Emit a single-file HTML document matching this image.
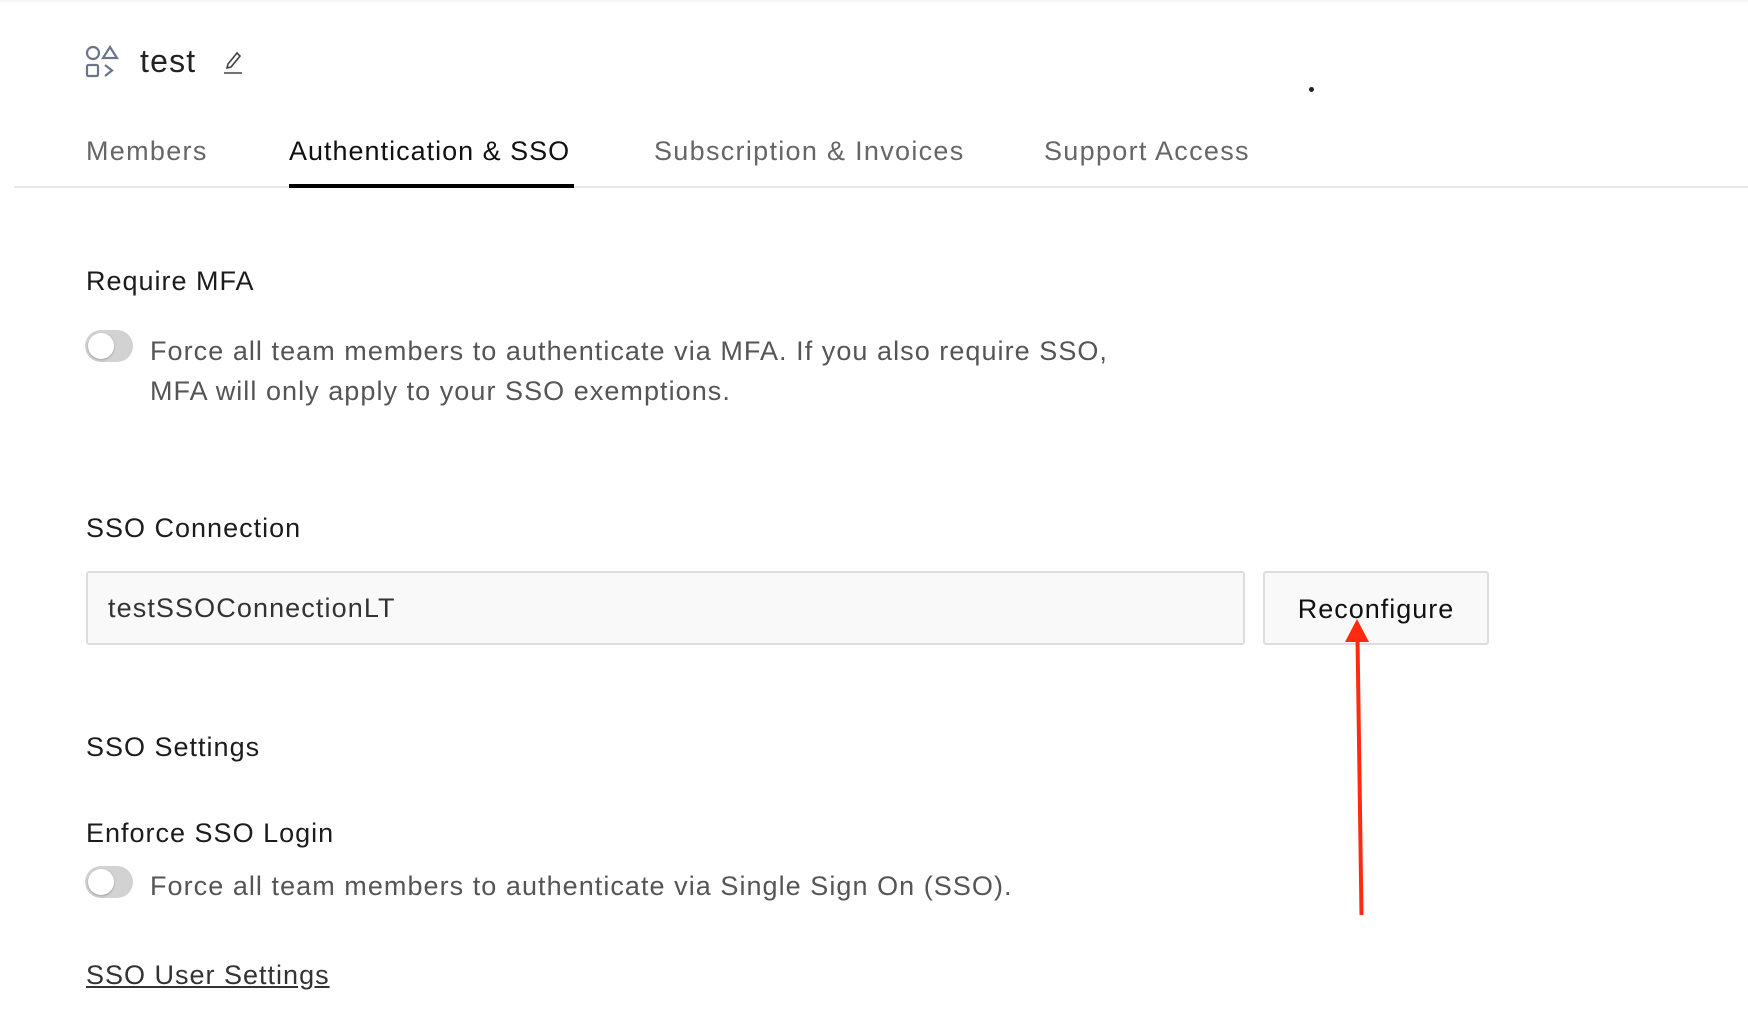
<!DOCTYPE html>
<html><head><meta charset="utf-8"><style>
*{margin:0;padding:0;box-sizing:border-box}
body{width:1748px;height:1014px;background:#fff;position:relative;overflow:hidden;font-family:"Liberation Sans",sans-serif;}
.a{position:absolute;white-space:nowrap;line-height:1}
.tab{font-size:27px;color:#666;letter-spacing:1.3px;top:138px}
.h{font-size:27px;color:#1c1c1c;letter-spacing:1px;left:86px}
.p{font-size:27px;color:#555;letter-spacing:1.05px;left:150px}
.tg{position:absolute;left:85px;width:48px;height:32px;border-radius:16px;background:#d2d2d2}
.tg::after{content:"";position:absolute;left:3px;top:3px;width:26px;height:26px;border-radius:50%;background:#fff;box-shadow:0 1px 2px rgba(0,0,0,.25)}
</style></head><body>
<div style="position:absolute;top:0;left:0;right:0;height:2px;background:#f4f4f4"></div>
<svg class="a" style="left:84px;top:44px" width="36" height="36" viewBox="0 0 36 36" fill="none" stroke="#6b7589" stroke-width="2.2">
<circle cx="9" cy="9" r="6"/><path d="M26 3 L33 14 L19 14 Z"/><rect x="3" y="21" width="11" height="11" rx="1.5"/><path d="M21 21 L28 26.5 L21 32"/></svg>
<div class="a" style="left:140px;top:45px;font-size:32px;color:#222;letter-spacing:1.2px">test</div>
<svg class="a" style="left:222px;top:47px" width="22" height="28" viewBox="0 0 22 28" fill="none" stroke="#444" stroke-width="1.6">
<path d="M6 17 L15 6 L18 9 L9 20 L5 21 Z"/><path d="M2 26 H20"/></svg>
<div class="a" style="left:1309px;top:87px;width:5px;height:5px;border-radius:50%;background:#222"></div>
<div class="a tab" style="left:86px">Members</div>
<div class="a tab" style="left:289px;color:#111;letter-spacing:1px">Authentication &amp; SSO</div>
<div class="a tab" style="left:654px">Subscription &amp; Invoices</div>
<div class="a tab" style="left:1044px">Support Access</div>
<div class="a" style="left:14px;right:0;top:186px;height:2px;background:#e8e8e8"></div>
<div class="a" style="left:289px;width:285px;top:184px;height:4px;background:#000"></div>
<div class="a h" style="top:268px">Require MFA</div>
<div class="tg" style="top:330px"></div>
<div class="a p" style="top:338px">Force all team members to authenticate via MFA. If you also require SSO,</div>
<div class="a p" style="top:378px">MFA will only apply to your SSO exemptions.</div>
<div class="a h" style="top:515px">SSO Connection</div>
<div class="a" style="left:86px;top:571px;width:1159px;height:74px;border:2px solid #ddd;border-radius:3px;background:#f9f9f9"></div>
<div class="a" style="left:108px;top:595px;font-size:27px;color:#333;letter-spacing:1.1px">testSSOConnectionLT</div>
<div class="a" style="left:1263px;top:571px;width:226px;height:74px;border:2px solid #ddd;border-radius:3px;background:#f9f9f9"></div>
<div class="a" style="left:1263px;width:226px;text-align:center;top:596px;font-size:27px;color:#111;letter-spacing:1px">Reconfigure</div>
<div class="a h" style="top:734px">SSO Settings</div>
<div class="a h" style="top:820px">Enforce SSO Login</div>
<div class="tg" style="top:866px"></div>
<div class="a p" style="top:873px">Force all team members to authenticate via Single Sign On (SSO).</div>
<div class="a h" style="top:962px;text-decoration:underline;color:#333">SSO User Settings</div>
<svg class="a" style="left:1340px;top:615px" width="40" height="305" viewBox="0 0 40 305">
<path d="M17.5 22 L21.5 300" stroke="#ff2a10" stroke-width="4"/>
<path d="M17 4 L29 27 L5 27 Z" fill="#ff2a10"/></svg>
</body></html>
